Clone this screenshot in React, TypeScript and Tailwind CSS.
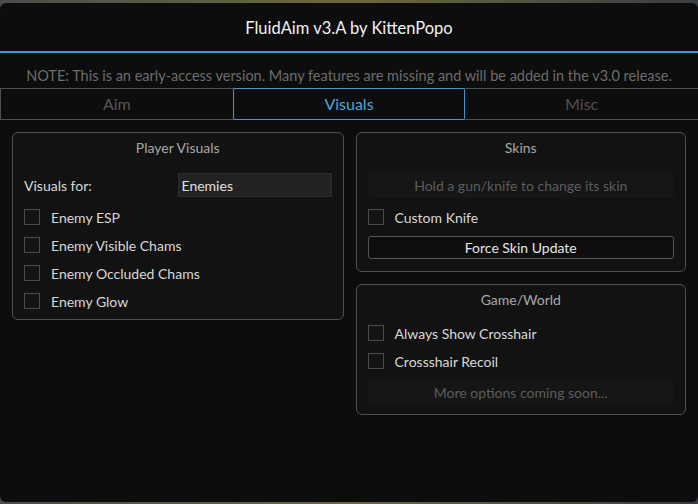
import React from 'react';

const font = { fontFamily: 'Lato, "Noto Sans", sans-serif' };

function Checkbox({ label }: { label: string }) {
  return (
    <div className="flex h-[28px] items-center gap-[11px]">
      <div className="h-[16px] w-[16px] border border-[#4a4a4a] bg-[#141414]" />
      <span className="text-[14px] text-[#d8d8d8]">{label}</span>
    </div>
  );
}

function Panel({ title, className, children }: { title: string; className?: string; children: React.ReactNode }) {
  return (
    <div className={`rounded-[6px] border border-[#4f4f4f] bg-[#121212] px-[11px] ${className ?? ''}`}>
      <div className="flex h-[28px] items-center justify-center text-[14px] text-[#a8a8a8]">{title}</div>
      {children}
    </div>
  );
}

export default function App() {
  return (
    <div
      className="flex h-[504px] w-[698px] flex-col overflow-hidden bg-gradient-to-r from-[#4a4d4a] via-[#6b6a3c] to-[#3a3d42] pt-[3px] pb-[2px]"
      style={font}
    >
      <div className="flex flex-1 flex-col rounded-[6px] bg-[#0d0d0d]">
        {/* Title bar */}
        <div className="flex h-[50px] items-center justify-center border-b-2 border-[#3f97cf] pt-[3px] text-[16.5px] text-[#f2f2f2]">
          FluidAim v3.A by KittenPopo
        </div>

        {/* Note */}
        <div className="flex h-[35px] items-end justify-center pb-[1px] text-[14.5px] text-[#6c6c6c]">
          NOTE: This is an early-access version. Many features are missing and will be added in the v3.0 release.
        </div>

        {/* Tabs */}
        <div className="grid h-[32px] grid-cols-3 border-y border-[#505050] text-[16px]">
          <div className="flex items-center justify-center border-l border-[#505050] text-[#555555]">Aim</div>
          <div className="-my-px flex items-center justify-center rounded-[2px] border border-[#3f97cf] text-[#4aa6dc]">
            Visuals
          </div>
          <div className="flex items-center justify-center text-[#505050]">Misc</div>
        </div>

        {/* Content */}
        <div className="flex gap-[12px] px-[12px] pt-[12px]">
          <Panel title="Player Visuals" className="h-[188px] w-[332px]">
            <div className="mt-[12px] flex items-center justify-between">
              <span className="text-[14px] text-[#d8d8d8]">Visuals for:</span>
              <div className="flex h-[24px] w-[154px] items-center border border-[#2c2c2c] bg-[#222222] px-[3px] text-[14px] text-[#e0e0e0]">
                Enemies
              </div>
            </div>
            <div className="mt-[6px]">
              <Checkbox label="Enemy ESP" />
              <Checkbox label="Enemy Visible Chams" />
              <Checkbox label="Enemy Occluded Chams" />
              <Checkbox label="Enemy Glow" />
            </div>
          </Panel>

          <div className="flex w-[331px] flex-col gap-[12px]">
            <Panel title="Skins" className="h-[140px]">
              <div className="mt-[11px] flex h-[26px] items-center justify-center rounded-[4px] bg-[#161616] text-[14px] text-[#5c5c5c]">
                Hold a gun/knife to change its skin
              </div>
              <div className="mt-[5px]">
                <Checkbox label="Custom Knife" />
              </div>
              <div className="mt-[5px] flex h-[23px] items-center justify-center rounded-[3px] border border-[#555555] bg-[#0e0e0e] text-[14px] text-[#e6e6e6]">
                Force Skin Update
              </div>
            </Panel>

            <Panel title="Game/World" className="h-[131px]">
              <div className="mt-[6px]">
                <Checkbox label="Always Show Crosshair" />
                <Checkbox label="Crossshair Recoil" />
              </div>
              <div className="mt-[5px] flex h-[24px] items-center justify-center rounded-[4px] bg-[#161616] text-[14px] text-[#5c5c5c]">
                More options coming soon...
              </div>
            </Panel>
          </div>
        </div>
      </div>
    </div>
  );
}
